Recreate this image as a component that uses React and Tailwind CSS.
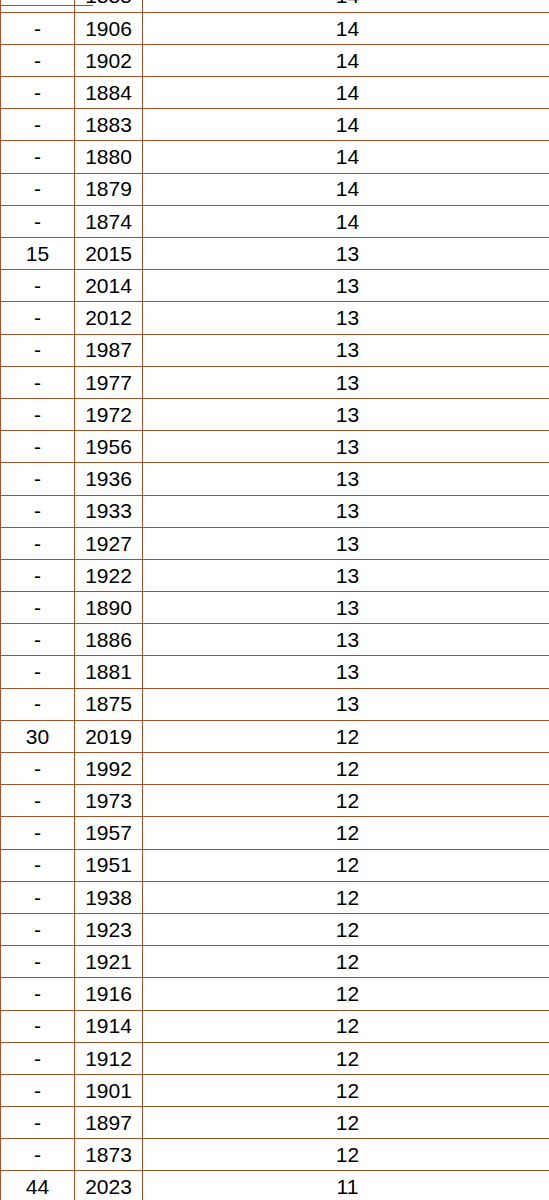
const ROWS = [
  ['-', '1885', '14'],
  ['-', '1906', '14'],
  ['-', '1902', '14'],
  ['-', '1884', '14'],
  ['-', '1883', '14'],
  ['-', '1880', '14'],
  ['-', '1879', '14'],
  ['-', '1874', '14'],
  ['15', '2015', '13'],
  ['-', '2014', '13'],
  ['-', '2012', '13'],
  ['-', '1987', '13'],
  ['-', '1977', '13'],
  ['-', '1972', '13'],
  ['-', '1956', '13'],
  ['-', '1936', '13'],
  ['-', '1933', '13'],
  ['-', '1927', '13'],
  ['-', '1922', '13'],
  ['-', '1890', '13'],
  ['-', '1886', '13'],
  ['-', '1881', '13'],
  ['-', '1875', '13'],
  ['30', '2019', '12'],
  ['-', '1992', '12'],
  ['-', '1973', '12'],
  ['-', '1957', '12'],
  ['-', '1951', '12'],
  ['-', '1938', '12'],
  ['-', '1923', '12'],
  ['-', '1921', '12'],
  ['-', '1916', '12'],
  ['-', '1914', '12'],
  ['-', '1912', '12'],
  ['-', '1901', '12'],
  ['-', '1897', '12'],
  ['-', '1873', '12'],
  ['44', '2023', '11'],
  ['-', '2011', '11'],
];

export default function App() {
  return (
    <div className="w-[549px] h-[1200px] overflow-hidden bg-white text-black font-['Liberation_Sans',Arial,sans-serif] text-[21px]">
      <div className="w-[552px] -mt-[19.5px] border-l border-[#a0522d]">
        {ROWS.map((row, i) => (
          <div key={i} className="relative flex h-[32.19px] border-b border-[#a0522d] box-border">
            <div className="w-[74px] flex items-center justify-center border-r border-[#a0522d]">{row[0]}</div>
            <div className="w-[68px] flex items-center justify-center border-r border-[#a0522d]">{row[1]}</div>
            <div className="flex-1 flex items-center justify-center">{row[2]}</div>
            {i === 0 && <div className="absolute left-0 top-[24px] w-[92px] h-px bg-[#a0522d]" />}
          </div>
        ))}
      </div>
    </div>
  );
}
